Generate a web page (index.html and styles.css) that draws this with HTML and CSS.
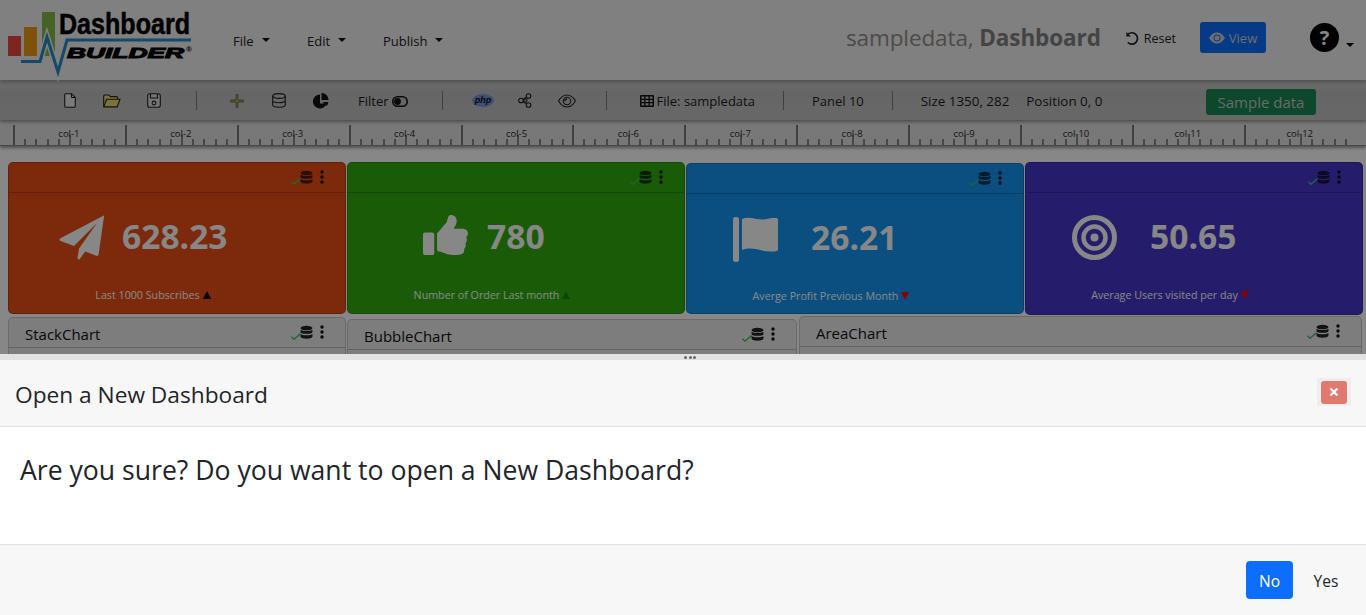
FILE: index.html
```html
<!DOCTYPE html>
<html lang="en">
<head>
<meta charset="utf-8">
<title>Dashboard Builder</title>
<link rel="stylesheet" href="styles.css">
</head>
<body>
<svg class="defs" width="0" height="0" aria-hidden="true">
  <symbol id="db" viewBox="0 0 14 15">
    <ellipse cx="7" cy="2.7" rx="6.4" ry="2.5"/>
    <path d="M.6 4.6C2 6.4 12 6.4 13.4 4.6V7.2C13 9.4 1 9.4 .6 7.2z"/>
    <path d="M.6 9C2 10.8 12 10.8 13.4 9v3C13 14.8 1 14.8 .6 12z"/>
  </symbol>
  <symbol id="check" viewBox="0 0 10 7">
    <path d="M.5 3.8 3 6.2 9.5.6" fill="none" stroke="#3cc06a" stroke-width="1.4"/>
  </symbol>
  <symbol id="dots" viewBox="0 0 4 14">
    <circle cx="2" cy="2" r="1.7"/><circle cx="2" cy="7" r="1.7"/><circle cx="2" cy="12" r="1.7"/>
  </symbol>
</svg>

<div class="page">
  <header class="topbar">
    <svg class="logo" viewBox="0 0 200 80" width="200" height="80" role="img" aria-label="Dashboard Builder">
      <rect x="8" y="36" width="13" height="20" fill="#e8483e"/>
      <rect x="24" y="27" width="13" height="29" fill="#f09a12"/>
      <rect x="42" y="12" width="13" height="44" fill="#85b94a"/>
      <path d="M21 61.5H40L47 37 58 72 67 40H191" fill="none" stroke="#f0f0f0" stroke-width="6"/>
      <path d="M21 61.5H40L47 37 58 72 67 40H191" fill="none" stroke="#2b8ac6" stroke-width="3"/>
      <text class="logo-top" x="68.200" y="34" transform="scale(.865 1)">Dashboard</text>
      <text class="logo-sub" x="67" y="58" textLength="117" lengthAdjust="spacingAndGlyphs">BUILDER</text>
      <text class="logo-reg" x="186" y="52">®</text>
    </svg>
    <nav class="menu">
      <span class="menu-item m-file">File<i class="caret"></i></span>
      <span class="menu-item m-edit">Edit<i class="caret"></i></span>
      <span class="menu-item m-pub">Publish<i class="caret"></i></span>
    </nav>
    <div class="doc-title">sampledata, <b>Dashboard</b></div>
    <span class="reset">
      <svg width="15" height="15" viewBox="0 0 15 15" fill="none" stroke="currentColor" stroke-width="1.700"><path d="M3 3.200A5.700 5.700 0 1 1 2.800 11.500"/><path d="M1.300 1V5.600H5.900z" fill="currentColor" stroke="none"/></svg>
      Reset
    </span>
    <span class="view-btn">
      <svg width="16" height="16" viewBox="0 0 16 16" fill="currentColor"><path d="M10.5 8a2.5 2.5 0 1 1-5 0 2.5 2.5 0 0 1 5 0z"/><path d="M0 8s3-5.5 8-5.5S16 8 16 8s-3 5.5-8 5.5S0 8 0 8zm8 3.5a3.5 3.5 0 1 0 0-7 3.5 3.5 0 0 0 0 7z"/></svg>
      View
    </span>
    <span class="help">?</span><i class="caret help-caret"></i>
  </header>

  <div class="toolbar">
    <span class="tool first">
      <svg width="12" height="15" viewBox="0 0 12 15"><path d="M1.5.7H7.5L11.3 4.5V13A1.3 1.3 0 0 1 10 14.3H2A1.3 1.3 0 0 1 .7 13V2A1.3 1.3 0 0 1 1.5.7z" fill="#e6e6e6" stroke="#222" stroke-width="1.1"/><path d="M7.5.7V4.5H11.3" fill="none" stroke="#222" stroke-width="1"/></svg>
    </span>
    <span class="tool">
      <svg width="18" height="14" viewBox="0 0 18 14"><path d="M.7 12.8V2A1 1 0 0 1 1.7 1H6L7.5 2.6H13.5A1 1 0 0 1 14.5 3.6V5" fill="#e9dc6a" stroke="#222" stroke-width="1.1"/><path d="M.8 12.9 3.6 5.2H17L14.2 12.9z" fill="#e9dc6a" stroke="#222" stroke-width="1.1"/></svg>
    </span>
    <span class="tool">
      <svg width="14" height="15" viewBox="0 0 14 15" fill="none" stroke="#222" stroke-width="1.1"><rect x=".7" y=".8" width="12.6" height="13.4" rx="2" fill="#ddd"/><path d="M3.5 1V5H10.5V1"/><circle cx="7" cy="10" r="1.9"/></svg>
    </span>
    <i class="sep s1"></i>
    <span class="tool">
      <svg width="14" height="14" viewBox="0 0 14 14"><path d="M7 .5V13.5M.5 7H13.5" stroke="#222" stroke-width="2.400"/><path d="M7 1V13M1 7H13" stroke="#f5f060" stroke-width="1"/></svg>
    </span>
    <span class="tool">
      <svg width="14" height="15" viewBox="0 0 14 15" fill="none" stroke="#222" stroke-width="1.1"><ellipse cx="7" cy="3" rx="6.3" ry="2.4"/><path d="M.7 3V12C.7 15 13.3 15 13.3 12V3M.7 7.5C.7 10.4 13.3 10.4 13.3 7.5"/></svg>
    </span>
    <span class="tool">
      <svg width="16" height="16" viewBox="0 0 16 16" fill="#111"><path d="M7 1.4A7 7 0 1 0 13.6 10.5H7z"/><path d="M8.5 0A7 7 0 0 1 15.6 7H8.5z"/><path d="M9.5 9H15.4A7 7 0 0 1 13.7 12.9z"/></svg>
    </span>
    <span class="filter">Filter
      <svg width="16" height="11" viewBox="0 0 16 11"><rect x=".8" y=".8" width="14.4" height="9.4" rx="4.7" fill="none" stroke="#111" stroke-width="1.6"/><circle cx="5.5" cy="5.5" r="3.4" fill="#111"/></svg>
    </span>
    <i class="sep s2"></i>
    <span class="tool">
      <svg width="22" height="13" viewBox="0 0 22 13"><ellipse cx="11" cy="6.5" rx="11" ry="6.5" fill="#7a96dc"/><text class="php" x="11" y="9.400" text-anchor="middle">php</text></svg>
    </span>
    <span class="tool t-nodes">
      <svg width="15" height="15" viewBox="0 0 15 15" fill="none" stroke="#222" stroke-width="1.1"><circle cx="3" cy="7.5" r="2.3"/><circle cx="10.5" cy="3" r="2.3"/><circle cx="10.5" cy="12" r="2.3"/><circle cx="7.4" cy="7.5" r="1.6"/><path d="M5 6.3 8.6 4.2M5 8.7 8.6 10.8"/></svg>
    </span>
    <span class="tool">
      <svg width="18" height="14" viewBox="0 0 18 14" fill="none" stroke="#222" stroke-width="1.1"><path d="M.6 7S3.800 1 9 1 17.400 7 17.400 7 14.200 13 9 13 .6 7 .6 7z"/><circle cx="9" cy="7" r="3.700"/><path d="M7 7A2 2 0 0 1 9 5" stroke-width="1.400"/></svg>
    </span>
    <i class="sep s3"></i>
    <span class="info i-file">
      <svg width="14" height="12" viewBox="0 0 14 12" fill="#111"><path fill-rule="evenodd" d="M1 0H13A1 1 0 0 1 14 1V11A1 1 0 0 1 13 12H1A1 1 0 0 1 0 11V1A1 1 0 0 1 1 0zM1.500 1.500V3.800H4.200V1.500zM5.500 1.500V3.800H8.500V1.500zM9.800 1.500V3.800H12.500V1.500zM1.500 4.900V7.100H4.200V4.900zM5.500 4.900V7.100H8.500V4.900zM9.800 4.900V7.100H12.500V4.900zM1.500 8.200V10.500H4.200V8.200zM5.500 8.200V10.500H8.500V8.200zM9.800 8.200V10.500H12.500V8.200z"/></svg>
      File: sampledata
    </span>
    <i class="sep s4"></i>
    <span class="info i-panel">Panel 10</span>
    <i class="sep s5"></i>
    <span class="info i-size">Size 1350, 282</span>
    <span class="info i-pos">Position 0, 0</span>
    <span class="sample">Sample data</span>
  </div>

  <div class="ruler">
    <div class="rcol"><span>col-1</span></div>
    <div class="rcol"><span>col-2</span></div>
    <div class="rcol"><span>col-3</span></div>
    <div class="rcol"><span>col-4</span></div>
    <div class="rcol"><span>col-5</span></div>
    <div class="rcol"><span>col-6</span></div>
    <div class="rcol"><span>col-7</span></div>
    <div class="rcol"><span>col-8</span></div>
    <div class="rcol"><span>col-9</span></div>
    <div class="rcol"><span>col-10</span></div>
    <div class="rcol"><span>col-11</span></div>
    <div class="rcol"><span>col-12</span></div>
  </div>

  <main class="canvas">
    <section class="row-kpi">
      <article class="card kpi orange">
        <div class="card-head"><span class="status"><svg class="ck"><use href="#check"/></svg><svg class="dbi"><use href="#db"/></svg></span><svg class="more"><use href="#dots"/></svg></div>
        <div class="stat st1">
          <svg class="stat-icon" viewBox="0 0 45 45"><path d="M44.300.7 1.400 23.300C.2 24 .3 25.600 1.600 26.100L15 31 38 8 20 33.500 18.500 43C18.400 44.400 20 45 20.800 43.900L26.200 36.500 37.200 40.800C38.300 41.200 39.400 40.500 39.600 39.400L45 1.500C45.100.7 44.900.4 44.300.7z"/></svg>
          <span class="value">628.23</span>
        </div>
        <p class="kpi-label l1">Last 1000 Subscribes<i class="tri up black"></i></p>
      </article>
      <article class="card kpi green">
        <div class="card-head"><span class="status"><svg class="ck"><use href="#check"/></svg><svg class="dbi"><use href="#db"/></svg></span><svg class="more"><use href="#dots"/></svg></div>
        <div class="stat st2">
          <svg class="stat-icon thumb" viewBox="0 0 512 512" preserveAspectRatio="none"><path d="M104 224H24c-13.255 0-24 10.745-24 24v240c0 13.255 10.745 24 24 24h80c13.255 0 24-10.745 24-24V248c0-13.255-10.745-24-24-24zM384 81.452c0 42.416-25.97 66.208-33.277 94.548h101.723c33.397 0 59.397 27.746 59.553 58.098.084 17.938-7.546 37.249-19.439 49.197l-.11.11c9.836 23.337 8.237 56.037-9.308 79.469 8.681 25.895-.069 57.704-16.382 74.757 4.298 17.598 2.244 32.575-6.148 44.632C440.202 511.587 389.616 512 346.839 512l-2.845-.001c-48.287-.017-87.806-17.598-119.56-31.725-15.957-7.099-36.821-15.887-52.651-16.178-6.54-.12-11.783-5.457-11.783-11.998v-213.77c0-3.2 1.282-6.271 3.558-8.521 39.614-39.144 56.648-80.587 89.117-113.111 14.804-14.832 20.188-37.236 25.393-58.902C282.515 39.293 291.817 0 312 0c24 0 72 8 72 81.452z"/></svg>
          <span class="value">780</span>
        </div>
        <p class="kpi-label l2">Number of Order Last month <i class="tri up dgreen"></i></p>
      </article>
      <article class="card kpi blue">
        <div class="card-head"><span class="status"><svg class="ck"><use href="#check"/></svg><svg class="dbi"><use href="#db"/></svg></span><svg class="more"><use href="#dots"/></svg></div>
        <div class="stat st3">
          <svg class="stat-icon flag" viewBox="0 0 45 45"><rect x="0" y="0" width="6" height="45" rx="2.500"/><path d="M9 2C18-2 26 5 36 1.500 44 .5 45 1 45 3V32C45 34 44 34.500 38 34.500 28 35 20 29 9 33z"/></svg>
          <span class="value">26.21</span>
        </div>
        <p class="kpi-label l3">Averge Profit Previous Month <i class="tri down red"></i></p>
      </article>
      <article class="card kpi purple">
        <div class="card-head"><span class="status"><svg class="ck"><use href="#check"/></svg><svg class="dbi"><use href="#db"/></svg></span><svg class="more"><use href="#dots"/></svg></div>
        <div class="stat st4">
          <svg class="stat-icon" viewBox="0 0 45 45"><circle cx="22.500" cy="22.500" r="20" fill="none" stroke="currentColor" stroke-width="5"/><circle cx="22.500" cy="22.500" r="11" fill="none" stroke="currentColor" stroke-width="4.500"/><circle cx="22.500" cy="22.500" r="4"/></svg>
          <span class="value">50.65</span>
        </div>
        <p class="kpi-label l4">Average Users visited per day <i class="tri down red"></i></p>
      </article>
    </section>
    <section class="row-charts">
      <article class="card chart ch1">
        <div class="card-head"><span class="chart-title">StackChart</span><span class="status"><svg class="ck"><use href="#check"/></svg><svg class="dbi"><use href="#db"/></svg></span><svg class="more"><use href="#dots"/></svg></div>
      </article>
      <article class="card chart ch2">
        <div class="card-head"><span class="chart-title">BubbleChart</span><span class="status"><svg class="ck"><use href="#check"/></svg><svg class="dbi"><use href="#db"/></svg></span><svg class="more"><use href="#dots"/></svg></div>
      </article>
      <article class="card chart ch3">
        <div class="card-head"><span class="chart-title">AreaChart</span><span class="status"><svg class="ck"><use href="#check"/></svg><svg class="dbi"><use href="#db"/></svg></span><svg class="more"><use href="#dots"/></svg></div>
      </article>
    </section>
  </main>
</div>

<div class="backdrop"></div>

<aside class="sheet">
  <div class="grip"><i></i><i></i><i></i></div>
  <div class="sheet-head">
    <h2>Open a New Dashboard</h2>
    <span class="close-wrap"><span class="close-btn">
      <svg width="10" height="10" viewBox="0 0 10 10"><path d="M1.500 1.500 8.500 8.500M8.500 1.500 1.500 8.500" stroke="#fff" stroke-width="2.200"/></svg>
    </span></span>
  </div>
  <div class="sheet-body">Are you sure? Do you want to open a New Dashboard?</div>
  <div class="sheet-foot">
    <span class="btn btn-no">No</span>
    <span class="btn btn-yes">Yes</span>
  </div>
</aside>
</body>
</html>
```
FILE: styles.css
```css
* { box-sizing: border-box; }
html, body { margin: 0; height: 615px; overflow: hidden; }
body { background: #fff; font-family: "Open Sans", "Noto Sans", sans-serif; color: #212529; }
.defs { position: absolute; }
.page { width: 1366px; height: 615px; overflow: hidden; }

/* top bar */
.topbar { display: flex; align-items: center; height: 80px; background: #f1f1f1; box-shadow: 0 2px 4px rgba(0,0,0,.3); position: relative; z-index: 3; }
.logo { flex: none; display: block; overflow: visible; }
.logo-top { font: 700 29px "Liberation Sans", sans-serif; fill: #000; stroke: #000; stroke-width: .5px; }
.logo-sub { font: italic 700 15px "Liberation Sans", sans-serif; fill: #000; stroke: #000; stroke-width: 1px; }
.logo-reg { font: 700 8px "Liberation Sans", sans-serif; fill: #000; }
.menu { display: flex; font-size: 13px; margin-top: 2px; }
.menu-item { display: inline-flex; align-items: center; color: #222; }
.m-file { margin-left: 33px; width: 74px; }
.m-edit { width: 76px; }
.caret { display: inline-block; width: 0; height: 0; margin-left: 8px; margin-top: -2px; border-left: 4.5px solid transparent; border-right: 4.5px solid transparent; border-top: 4.5px solid #111; }
.doc-title { margin-left: auto; font-size: 22.500px; color: #8f8f8f; margin-top: -6px; letter-spacing: -.1px; }
.doc-title b { color: #808080; }
.reset { display: inline-flex; align-items: center; gap: 4px; margin-left: 24px; font-size: 12.500px; color: #222; margin-top: -4px; }
.view-btn { display: inline-flex; align-items: center; justify-content: center; gap: 4px; width: 66px; height: 31px; margin-left: 24px; margin-top: -5px; border-radius: 3px; background: #0d6efd; color: #cfcfcf; font-size: 13px; }
.help { display: inline-flex; align-items: center; justify-content: center; width: 29px; height: 29px; margin-left: 44px; margin-top: -5px; border-radius: 50%; background: #000; color: #fff; font: 700 20px "Open Sans", sans-serif; }
.help-caret { margin-left: 7px; margin-right: 12px; margin-top: 9px; border-top-color: #000; }

/* tool bar */
.toolbar { display: flex; align-items: center; height: 40px; background: linear-gradient(#cfcfcf, #c0c0c0 30%, #c4c4c4); box-shadow: 0 2px 3px rgba(0,0,0,.35); position: relative; z-index: 2; font-size: 13px; color: #1c1c1c; }
.tool { flex: none; display: flex; align-items: center; justify-content: center; width: 42px; height: 20px; margin-top: 1px; }
.tool.first { margin-left: 49px; }
.t-nodes { padding-left: 2px; }
.sep { flex: none; display: block; width: 1px; height: 19px; background: #7a7a7a; margin-top: 1px; }
.s1 { margin: 1px 19px 0 21px; }
.s2 { margin: 1px 19px 0 34px; }
.s3 { margin: 1px 33px 0 18px; }
.s4 { margin: 1px 28px 0; }
.s5 { margin: 1px 28px 0; }
.filter { display: inline-flex; align-items: center; gap: 3px; margin-left: 16px; margin-top: 2px; }
.php { font: italic 700 9px "Liberation Sans", sans-serif; fill: #111; }
.info { display: inline-flex; align-items: center; gap: 5px; white-space: nowrap; margin-top: 2px; }
.i-file { gap: 3px; }
.i-size, .i-pos { font-size: 13.400px; }
.i-pos { margin-left: 17px; }
.sample { display: inline-flex; align-items: center; justify-content: center; width: 110px; height: 26px; margin-left: auto; margin-right: 50px; margin-top: 3px; border-radius: 3px; background: #198754; color: #c8c8c8; font-size: 15px; }

/* ruler */
.ruler { display: flex; height: 26px; padding: 5px 0 0 13px; background: #e2e2e2; box-shadow: 0 2px 3px rgba(0,0,0,.4); border-bottom: 1px solid #888; position: relative; z-index: 1; }
.rcol { flex: none; position: relative; width: 111.900px; border-left: 2px solid #777;
  background: repeating-linear-gradient(to right, transparent 0, transparent 9.200px, #888 9.200px, #888 11.200px) left bottom / 100% 6px no-repeat,
              linear-gradient(#888, #888) 54px bottom / 2px 10px no-repeat; font-size: 9.500px; color: #2a2a2a; text-align: center; }
.rcol span { display: block; margin-top: 2px; line-height: 13px; padding-right: 2px; }

/* canvas */
.canvas { background: #fff; height: 260px; padding: 16px 0 0 8px; }
.row-kpi { display: flex; gap: 1px; height: 153px; }
.row-charts { display: flex; }
.card { flex: none; border: 1px solid rgba(0,0,0,.2); border-radius: 5px; overflow: hidden; }
.card-head { display: flex; align-items: center; justify-content: flex-end; height: 30px; padding-right: 21px; border-bottom: 1px solid rgba(0,0,0,.2); }
.status { display: flex; align-items: center; margin-right: 7px; }
.ck { width: 10px; height: 7px; margin-top: 7px; }
.dbi { width: 13px; height: 15px; fill: #222; margin-left: -1px; }
.more { width: 4px; height: 14px; fill: #111; margin-top: -1px; }
.kpi { width: 338px; height: 152px; }
.orange { background: #ec4f15; }
.green { background: #31ad0f; }
.blue { background: #1395f1; margin-top: 1px; height: 151px; }
.purple { background: #4935cc; height: 153px; }
.orange .dbi, .green .dbi, .blue .dbi, .purple .dbi { fill: rgba(0,0,0,.65); }
.stat { display: flex; align-items: center; height: 88px; margin-bottom: 2px; color: #fff; fill: #fff; }
.stat-icon { flex: none; width: 45px; height: 45px; fill: currentColor; }
.stat-icon.thumb { height: 40px; margin-top: -5px; }
.value { font-size: 33.600px; font-weight: 700; line-height: 1; }
.st1 { padding-left: 50px; gap: 18px; }
.st2 { padding-left: 75px; gap: 19px; }
.st3 { padding-left: 46px; gap: 33px; }
.st3 .stat-icon { margin-top: 2px; }
.st4 { padding-left: 46px; gap: 33px; }
.kpi-label { margin: 7px 0 0; font-size: 10.700px; color: #fff; text-align: center; padding-right: 48px; display: flex; justify-content: center; align-items: center; gap: 3px; white-space: nowrap; }
.tri { display: inline-block; width: 0; height: 0; border-left: 4.500px solid transparent; border-right: 4.500px solid transparent; }
.up.black { border-bottom: 8px solid #000; }
.up.dgreen { border-bottom: 8px solid #0b8a0b; }
.down.red { border-top: 8px solid #f00; }
.chart { height: 60px; background: #ececec; border-color: rgba(0,0,0,.15); margin-top: 2px; }
.chart .card-head { border-bottom-color: rgba(0,0,0,.2); }
.chart-title { margin-right: auto; margin-top: 3px; padding-left: 16px; font-size: 15px; color: #111; }
.ch1 { width: 338px; }
.ch2 { width: 450px; margin: 4px 0 0 1px; }
.ch3 { width: 563px; margin: 1px 0 0 2px; }

/* overlay */
.backdrop { position: fixed; inset: 0; z-index: 10; background: rgba(0,0,0,.47); }
.sheet { position: fixed; left: 0; right: 0; bottom: 0; height: 261px; z-index: 11; display: flex; flex-direction: column; background: #fff; }
.grip { display: flex; align-items: center; justify-content: center; gap: 1.500px; height: 6px; background: #e2e2e2; padding-left: 14px; }
.grip i { display: block; width: 3px; height: 3px; border-radius: 50%; background: #666; }
.sheet-head { display: flex; align-items: center; justify-content: space-between; height: 67px; padding: 0 15px; background: #f7f7f7; border-bottom: 1px solid #dee2e6; }
.sheet-head h2 { margin: 2px 0 0; font-size: 22.700px; font-weight: 400; color: #212529; }
.close-wrap { display: flex; align-items: center; justify-content: center; width: 34px; height: 28px; background: #eee; margin-top: -2px; }
.close-btn { display: flex; align-items: center; justify-content: center; width: 26px; height: 23px; border-radius: 3px; background: #e07a70; }
.sheet-body { flex: 1; padding: 25px 20px 0; font-size: 26.600px; color: #212529; }
.sheet-foot { display: flex; align-items: center; justify-content: flex-end; height: 71px; padding-right: 7px; background: #f7f7f7; border-top: 1px solid #dee2e6; }
.btn { display: inline-flex; align-items: center; justify-content: center; height: 38px; padding-top: 2px; border-radius: 4px; font-size: 15.500px; }
.btn-no { width: 47px; background: #0d6efd; color: #fff; }
.btn-yes { width: 66px; color: #212529; }
```
